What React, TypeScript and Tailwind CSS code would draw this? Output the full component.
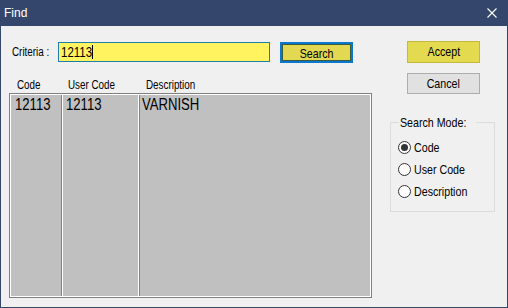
const font = "font-['Liberation_Sans',Arial,sans-serif]";

// the dialog font is narrower than Arial, so squeeze the glyphs a bit
const Narrow = ({ children, center }: { children: React.ReactNode; center?: boolean }) => (
  <span className={`inline-block whitespace-nowrap scale-x-[0.82] ${center ? "origin-center" : "origin-left"}`}>
    {children}
  </span>
);

const Radio = ({ label, checked }: { label: string; checked?: boolean }) => (
  <div className="h-[22px] flex items-center pl-[7px]">
    <span className="w-[13px] h-[13px] shrink-0 rounded-full border border-[#333333] bg-white flex items-center justify-center">
      {checked && <span className="w-[7px] h-[7px] rounded-full bg-[#333333]" />}
    </span>
    <span className="ml-[3px] text-[13px] leading-[15px] text-black">
      <Narrow>{label}</Narrow>
    </span>
  </div>
);

const App = () => {
  return (
    <div className={`w-[508px] h-[308px] bg-[#34466b] flex flex-col ${font}`}>
      {/* title bar */}
      <div className="h-[26px] flex items-center justify-between pl-[4px] pr-[11px]">
        <span className="text-white text-[12px]">Find</span>
        <svg width="10" height="10" viewBox="0 0 10 10" className="text-white">
          <path d="M0.5 0.5 L9.5 9.5 M9.5 0.5 L0.5 9.5" stroke="currentColor" strokeWidth="1.1" />
        </svg>
      </div>

      <div className="flex-1 mx-px mb-px bg-[#f0f0f0] flex">
        {/* left side */}
        <div className="ml-[8px] w-[363px] flex flex-col">
          <div className="mt-[16px] h-[21px] flex items-start">
            <span className="ml-[3px] w-[46px] text-[12px] leading-[20px] text-black">
              <Narrow>Criteria :</Narrow>
            </span>
            <div className="w-[212px] h-[20px] border border-[#1d7fa6] bg-[#fff45f] flex items-center pl-[2px] text-[14px] text-black">
              <Narrow>12113</Narrow>
              <span className="-ml-[7px] w-px h-[14px] bg-black" />
            </div>
            <button className="ml-[10px] w-[73px] h-[21px] border-2 border-[#0a78cc] bg-[#e2d852] shadow-[inset_0_0_0_1px_#3c5a3e] text-[13px] text-black">
              <Narrow center>Search</Narrow>
            </button>
          </div>

          <div className="h-[30px] pt-[15px] pl-[8px] flex text-[12px] leading-[14px] text-black">
            <span className="w-[51px]"><Narrow>Code</Narrow></span>
            <span className="w-[78px]"><Narrow>User Code</Narrow></span>
            <span><Narrow>Description</Narrow></span>
          </div>

          <div className="h-[205px] border border-[#808080]">
            <div className="h-full border border-white bg-[#c0c0c0] flex text-[16px] leading-[18px] text-black">
              <div className="w-[51px] border-r border-[#808080] pl-[4px] pt-px"><Narrow>12113</Narrow></div>
              <div className="w-[77px] border-x border-white pl-[3px] pt-px"><Narrow>12113</Narrow></div>
              <div className="flex-1 border-l border-[#808080] pl-[2px] pt-px"><Narrow>VARNISH</Narrow></div>
            </div>
          </div>
        </div>

        {/* right side */}
        <div className="ml-[18px] w-[105px] flex flex-col">
          <button className="mt-[15px] ml-[17px] w-[73px] h-[22px] border border-[#c4b93c] bg-[#e3da4f] text-[13px] text-black">
            <Narrow center>Accept</Narrow>
          </button>
          <button className="mt-[10px] ml-[17px] w-[73px] h-[21px] border border-[#adadad] bg-[#e1e1e1] text-[13px] text-black">
            <Narrow center>Cancel</Narrow>
          </button>

          <fieldset className="mt-[21px] h-[97px] border border-[#dcdcdc] pt-[6px]">
            <legend className="ml-[8px] px-px w-[77px] text-[13px] leading-[15px] text-black">
              <Narrow>Search Mode:</Narrow>
            </legend>
            <Radio label="Code" checked />
            <Radio label="User Code" />
            <Radio label="Description" />
          </fieldset>
        </div>
      </div>
    </div>
  );
};

export default App;
